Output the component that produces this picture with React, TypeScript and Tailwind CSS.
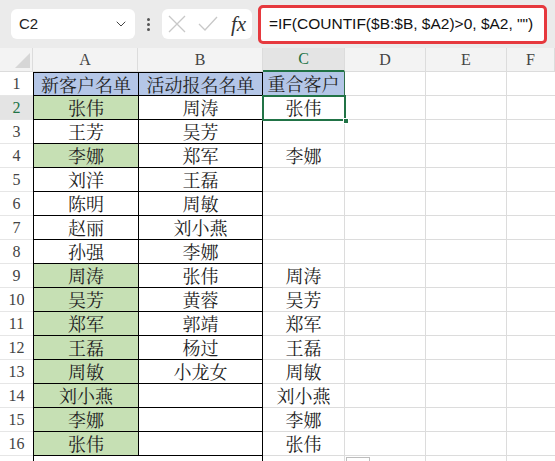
import { ChevronDown } from 'lucide-react';

type Row = { a: string; b: string; c: string; green: boolean };

const rows: Row[] = [
  { a: '张伟', b: '周涛', c: '张伟', green: true },
  { a: '王芳', b: '吴芳', c: '', green: false },
  { a: '李娜', b: '郑军', c: '李娜', green: true },
  { a: '刘洋', b: '王磊', c: '', green: false },
  { a: '陈明', b: '周敏', c: '', green: false },
  { a: '赵丽', b: '刘小燕', c: '', green: false },
  { a: '孙强', b: '李娜', c: '', green: false },
  { a: '周涛', b: '张伟', c: '周涛', green: true },
  { a: '吴芳', b: '黄蓉', c: '吴芳', green: true },
  { a: '郑军', b: '郭靖', c: '郑军', green: true },
  { a: '王磊', b: '杨过', c: '王磊', green: true },
  { a: '周敏', b: '小龙女', c: '周敏', green: true },
  { a: '刘小燕', b: '', c: '刘小燕', green: true },
  { a: '李娜', b: '', c: '李娜', green: true },
  { a: '张伟', b: '', c: '张伟', green: true },
];

const cjk = "font-['SimSun','Noto_Serif_CJK_SC','Noto_Sans_CJK_SC',serif]";
const serif = "font-['Liberation_Serif',serif]";

export default function App() {
  return (
    <div className="relative w-[555px] h-[461px] overflow-hidden bg-white">
      {/* Formula bar */}
      <div className="flex h-[48px] items-center bg-[#ebebeb] pl-[11px]">
        <div className="flex h-[30px] w-[124px] items-center justify-between rounded-md bg-white pl-[8px] pr-[6px]">
          <span className="font-['Liberation_Sans',sans-serif] text-[15px] text-[#222]">C2</span>
          <ChevronDown className="h-4 w-4 text-[#444]" strokeWidth={1.5} />
        </div>
        <div className="mx-[12px] flex flex-col gap-[2px]">
          <div className="h-[3px] w-[3px] rounded-full bg-[#555]" />
          <div className="h-[3px] w-[3px] rounded-full bg-[#555]" />
          <div className="h-[3px] w-[3px] rounded-full bg-[#555]" />
        </div>
        <div className="flex h-[30px] w-[90px] items-center rounded-md bg-white pl-[6px]">
          <svg width="18" height="18" viewBox="0 0 18 18" className="text-[#c8c8c8]">
            <path d="M1 1L17 17M17 1L1 17" stroke="currentColor" strokeWidth="1.3" fill="none" />
          </svg>
          <svg width="20" height="16" viewBox="0 0 20 16" className="ml-[12px] text-[#c8c8c8]">
            <path d="M1 8L7 14L19 1" stroke="currentColor" strokeWidth="1.3" fill="none" />
          </svg>
          <span className="ml-[13px] font-['Liberation_Serif',serif] text-[21px] italic leading-none text-[#333]">fx</span>
        </div>
        <div className="ml-[6px] flex h-[39px] w-[289px] items-center rounded-[5px] border-[3px] border-[#e6393e] bg-white pl-[8px]">
          <span className="font-['Liberation_Sans',sans-serif] text-[15.5px] text-[#111] whitespace-nowrap">
            =IF(COUNTIF($B:$B, $A2)&gt;0, $A2, "")
          </span>
        </div>
      </div>

      {/* Sheet */}
      <div className="grid grid-cols-[33px_105px_125px_82px_81px_81px_48px] auto-rows-[24px]">
        {/* column headers */}
        <div className="border-r border-b border-[#dcdcdc] bg-[#f3f3f3]" />
        {['A', 'B', 'C', 'D', 'E', 'F'].map((l) => (
          <div
            key={l}
            className={`flex items-center justify-center border-r text-[16px] text-[#444] ${serif} ${
              l === 'C'
                ? 'border-b-2 border-r-[#dcdcdc] border-b-[#217346] bg-[#e4e4e4] text-[#217346]'
                : 'border-b border-[#dcdcdc] bg-[#f3f3f3]'
            }`}
          >
            {l}
          </div>
        ))}

        {/* row 1 */}
        <div className={`flex items-center justify-center border-b border-[#e6e6e6] text-[16px] text-[#444] ${serif}`}>1</div>
        <div className={`flex items-center justify-center border border-r-0 border-black bg-[#b4c6e7] text-[18px] text-[#222] ${cjk}`}>新客户名单</div>
        <div className={`flex items-center justify-center border border-black bg-[#b4c6e7] text-[18px] text-[#222] ${cjk}`}>活动报名名单</div>
        <div className={`flex items-center justify-center border-r border-b border-r-[#2f6f4a] border-b-[#dcdcdc] bg-[#b4c6e7] text-[18px] text-[#222] ${cjk}`}>重合客户</div>
        <div className="border-r border-b border-[#dcdcdc]" />
        <div className="border-r border-b border-[#dcdcdc]" />
        <div className="border-b border-[#dcdcdc]" />

        {rows.map((r, i) => {
          const n = i + 2;
          return (
            <>
              <div
                key={`n${n}`}
                className={`flex items-center justify-center border-b border-[#e6e6e6] text-[16px] ${serif} ${
                  n === 2 ? 'bg-[#e4e4e4] text-[#217346]' : 'text-[#444]'
                }`}
              >
                {n}
              </div>
              <div
                key={`a${n}`}
                className={`flex items-center justify-center border-l border-b border-black text-[18px] text-[#222] ${cjk} ${
                  r.green ? 'bg-[#c6e0b4]' : 'bg-white'
                }`}
              >
                {r.a}
              </div>
              <div
                key={`b${n}`}
                className={`flex items-center justify-center border-x border-b border-black text-[18px] text-[#222] ${cjk}`}
              >
                {r.b}
              </div>
              <div
                key={`c${n}`}
                className={`flex items-center justify-center border-r border-b border-[#dcdcdc] text-[18px] text-[#222] ${cjk}`}
              >
                {r.c}
              </div>
              <div key={`d${n}`} className="border-r border-b border-[#dcdcdc]" />
              <div key={`e${n}`} className="border-r border-b border-[#dcdcdc]" />
              <div key={`f${n}`} className="border-b border-[#dcdcdc]" />
            </>
          );
        })}

        {/* row 17 */}
        <div className="border-b border-[#e6e6e6]" />
        <div className="border-l border-black" />
        <div className="border-r border-black" />
        <div className="border-r border-[#dcdcdc]" />
        <div className="border-r border-[#dcdcdc]" />
        <div className="border-r border-[#dcdcdc]" />
        <div />
      </div>

      {/* corner triangle */}
      <div className="absolute left-[15px] top-[53px] h-0 w-0 border-b-[15px] border-l-[15px] border-b-[#d6d6d6] border-l-transparent" />

      {/* active cell C2 */}
      <div className="absolute left-[262px] top-[95px] h-[26px] w-[84px] border-2 border-[#217346]" />
      <div className="absolute left-[343px] top-[118px] h-[6px] w-[6px] border border-white bg-[#217346]" />

      {/* small box below */}
      <div className="absolute left-[346px] top-[457px] h-[10px] w-[24px] border border-[#bdbdbd] bg-white" />
    </div>
  );
}
